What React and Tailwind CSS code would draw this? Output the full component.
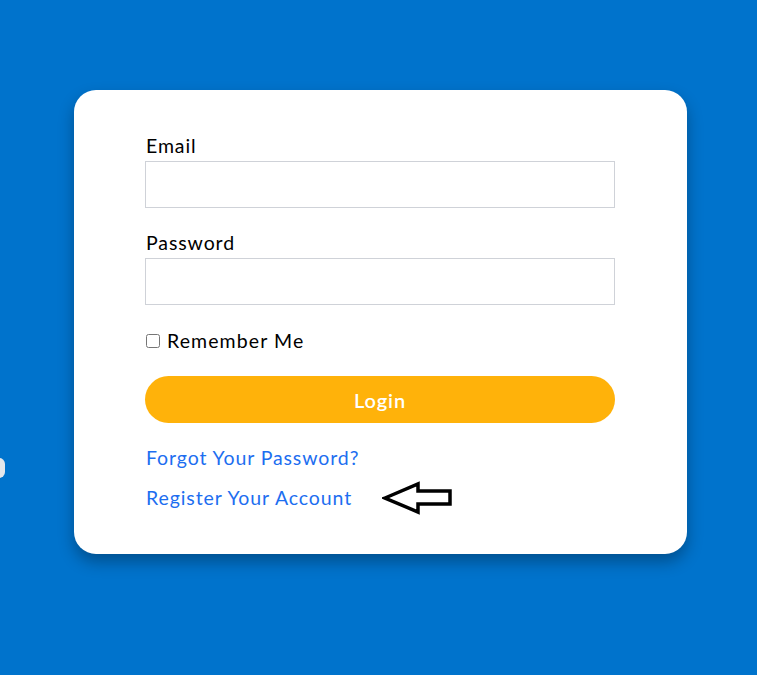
import React from 'react';

const font = { fontFamily: '"Lato", "Open Sans", sans-serif' };

const Arrow = () => (
  <svg width="72" height="34" viewBox="0 0 72 34" className="ml-[30px]">
    <polygon
      points="3,17 36,3 36,10 68,10 68,23 36,23 36,31"
      fill="none"
      stroke="#000"
      strokeWidth="3.5"
      strokeLinejoin="miter"
    />
  </svg>
);

export default function App() {
  return (
    <div className="relative w-full min-h-[675px] bg-[#0073cc] pt-[90px]" style={font}>
      {/* stray blob on the left edge */}
      <div className="absolute left-[-7px] top-[458px] w-[12px] h-[20px] rounded-full bg-[#e4e7eb]" />

      <div className="ml-[74px] w-[613px] h-[464px] bg-white rounded-[22px] shadow-[0_8px_16px_rgba(0,0,0,0.3)] px-[71px] pt-[44px]">
        <form className="flex flex-col tracking-[0.9px]">
          <label className="ml-[1px] text-[19.5px] leading-[24px] text-black">Email</label>
          <input
            type="email"
            className="mt-[3px] h-[47px] w-[470px] border border-[#cfd2d8] outline-none"
          />

          <label className="ml-[1px] mt-[23px] text-[19.5px] leading-[24px] text-black">Password</label>
          <input
            type="password"
            className="mt-[3px] h-[47px] w-[470px] border border-[#cfd2d8] outline-none"
          />

          <div className="mt-[24px] flex items-center">
            <input type="checkbox" className="w-[14px] h-[14px] ml-[1px]" />
            <span className="ml-[7px] text-[19.5px] leading-[24px] tracking-[1.1px] text-black">Remember Me</span>
          </div>

          <button
            type="button"
            className="mt-[23px] h-[47px] w-[470px] rounded-full bg-[#ffb20a] text-white text-[20px] font-semibold"
          >
            Login
          </button>

          <a href="#" className="ml-[1px] mt-[23px] text-[19.5px] leading-[24px] text-[#1d6ef0]">
            Forgot Your Password?
          </a>
          <div className="ml-[1px] mt-[11px] flex items-center">
            <a href="#" className="text-[19.5px] leading-[24px] text-[#1d6ef0]">
              Register Your Account
            </a>
            <Arrow />
          </div>
        </form>
      </div>
    </div>
  );
}
